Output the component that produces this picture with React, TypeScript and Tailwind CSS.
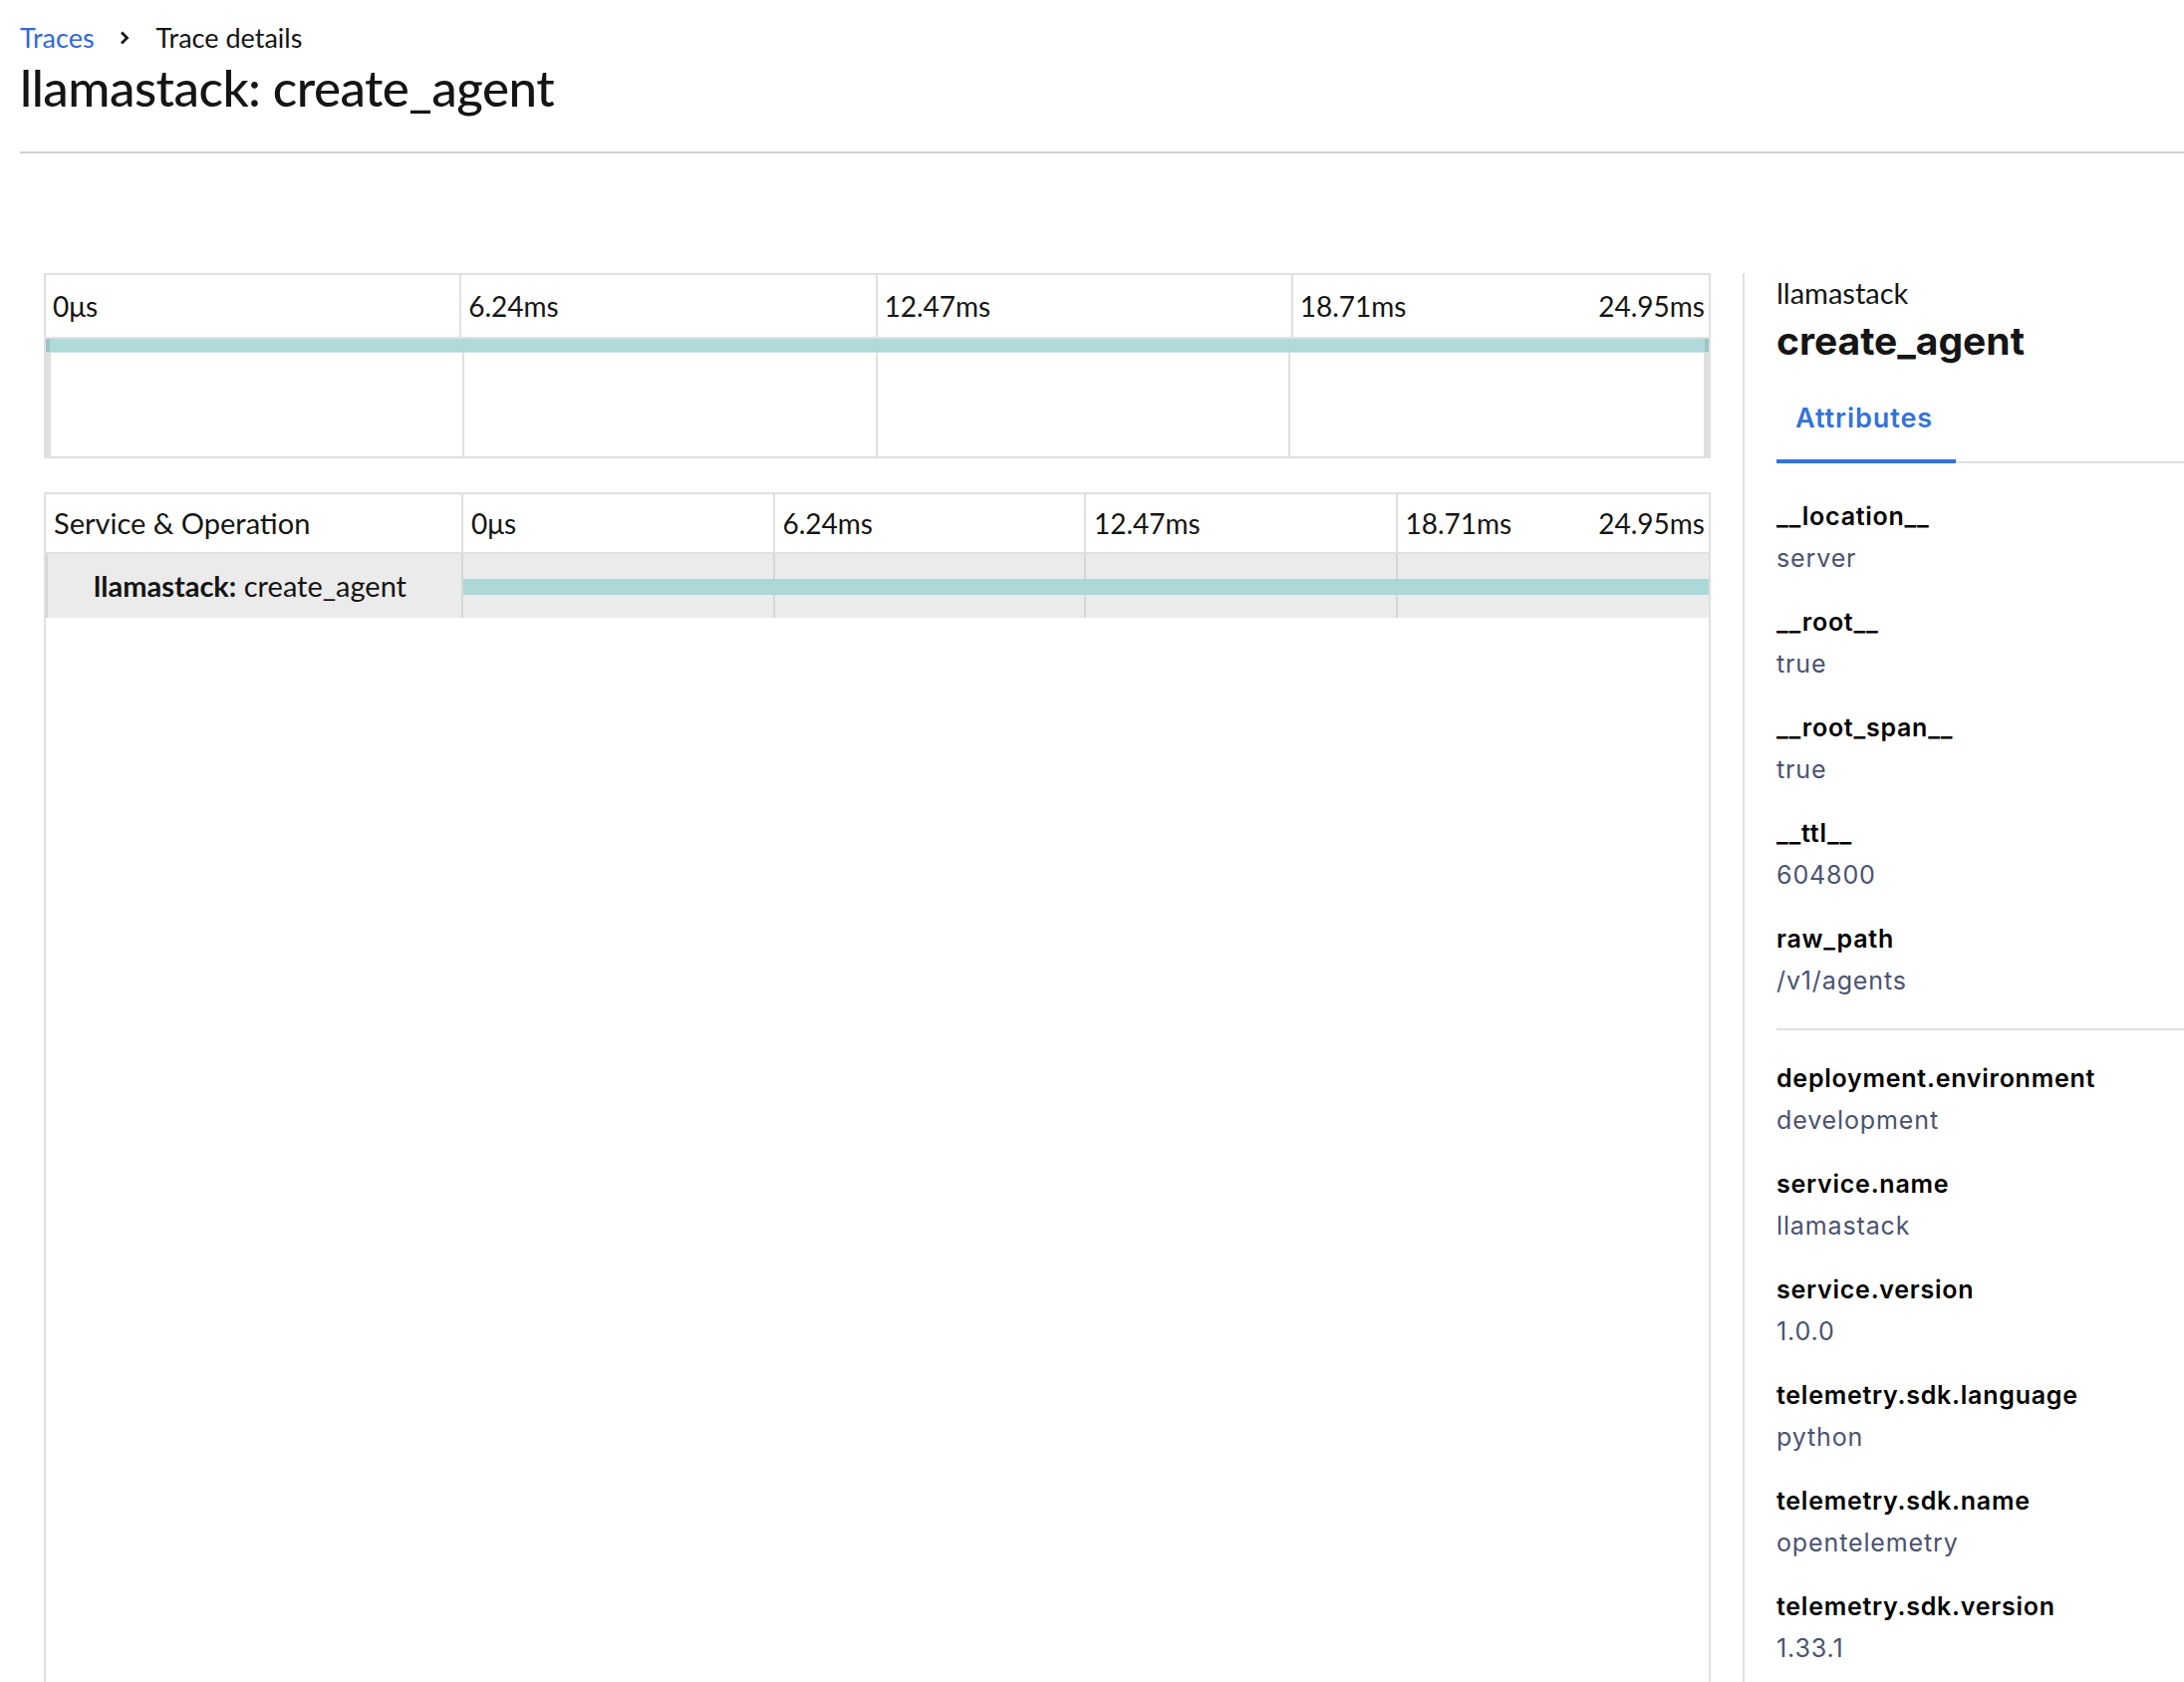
import React from "react";

const attrs1 = [
  ["__location__", "server"],
  ["__root__", "true"],
  ["__root_span__", "true"],
  ["__ttl__", "604800"],
  ["raw_path", "/v1/agents"],
];
const attrs2 = [
  ["deployment.environment", "development"],
  ["service.name", "llamastack"],
  ["service.version", "1.0.0"],
  ["telemetry.sdk.language", "python"],
  ["telemetry.sdk.name", "opentelemetry"],
  ["telemetry.sdk.version", "1.33.1"],
];

function Attr({ k, v }: { k: string; v: string }) {
  return (
    <div className="flex flex-col">
      <div className="h-[42px] flex items-center text-[25px] font-semibold text-black [font-family:Inter,sans-serif] tracking-[0.03em]">
        {k}
      </div>
      <div className="h-[42px] flex items-center text-[25px] text-[#4b5270] [font-family:Inter,sans-serif] tracking-[0.035em]">
        {v}
      </div>
    </div>
  );
}

export default function App() {
  return (
    <div className="w-[2192px] h-[1688px] overflow-hidden bg-white text-[#151515] [font-family:Lato,sans-serif]">
      <div className="pl-[20px] pt-[22px]">
        <div className="h-[32px] flex items-center text-[27px]">
          <span className="text-[#2f6ad4]">Traces</span>
          <svg className="ml-[23px] mr-[25px]" width="14" height="16" viewBox="0 0 14 16">
            <path d="M4 2.5l5.5 5.5-5.5 5.5" stroke="#151515" strokeWidth="2.8" fill="none" />
          </svg>
          <span>Trace details</span>
        </div>
        <div className="mt-[5px] h-[58px] flex items-center text-[51px] font-medium tracking-[-0.01em]">
          llamastack: create_agent
        </div>
      </div>
      <div className="ml-[20px] mt-[35px] border-t-2 border-[#d2d2d2]" />

      <div className="flex pt-[120px] pl-[44px]">
        {/* left column */}
        <div className="w-[1673px] flex flex-col">
          {/* minimap */}
          <div className="h-[186px] border-2 border-[#e0e0e0] flex flex-col">
            <div className="h-[64px] grid grid-cols-4 border-b-2 border-[#e0e0e0] text-[28px]">
              <div className="border-r-2 border-[#e0e0e0] pl-[7px] flex items-center">0μs</div>
              <div className="border-r-2 border-[#e0e0e0] pl-[7px] flex items-center">6.24ms</div>
              <div className="border-r-2 border-[#e0e0e0] pl-[7px] flex items-center">12.47ms</div>
              <div className="pl-[7px] pr-[4px] flex items-center justify-between">
                <span>18.71ms</span>
                <span>24.95ms</span>
              </div>
            </div>
            <div className="flex-1 relative flex">
              <div className="w-[5px] bg-[#e0e0e0]" />
              <div className="flex-1 grid grid-cols-4">
                <div className="border-r-2 border-[#e0e0e0]" />
                <div className="border-r-2 border-[#e0e0e0]" />
                <div className="border-r-2 border-[#e0e0e0]" />
                <div />
              </div>
              <div className="w-[5px] bg-[#e0e0e0]" />
              <div className="absolute left-0 right-0 top-0 h-[14px] bg-[#acd8d8] opacity-95 border-b border-[#c6e4e4]">
                <div className="absolute left-0 top-0 bottom-0 w-[4px] bg-[#98c4c5]" />
                <div className="absolute right-0 top-0 bottom-0 w-[4px] bg-[#98c4c5]" />
              </div>
            </div>
          </div>

          {/* table */}
          <div className="mt-[34px] h-[1300px] border-2 border-[#e0e0e0] flex flex-col">
            <div className="h-[60px] flex border-b-2 border-[#e0e0e0] text-[28px]">
              <div className="w-[419px] border-r-2 border-[#e0e0e0] pl-[8px] flex items-center text-[29px]">
                Service &amp; Operation
              </div>
              <div className="flex-1 grid grid-cols-4">
                <div className="border-r-2 border-[#e0e0e0] pl-[8px] flex items-center">0μs</div>
                <div className="border-r-2 border-[#e0e0e0] pl-[8px] flex items-center">6.24ms</div>
                <div className="border-r-2 border-[#e0e0e0] pl-[8px] flex items-center">12.47ms</div>
                <div className="pl-[8px] pr-[4px] flex items-center justify-between">
                  <span>18.71ms</span>
                  <span>24.95ms</span>
                </div>
              </div>
            </div>
            <div className="h-[64px] flex bg-[#ebebeb] text-[29px]">
              <div className="w-[419px] border-r-2 border-l-2 border-[#d6d6d6] pl-[46px] flex items-center">
                <span className="font-bold">llamastack:</span>
                <span>&nbsp;create_agent</span>
              </div>
              <div className="flex-1 relative grid grid-cols-4">
                <div className="border-r-2 border-[#d6d6d6]" />
                <div className="border-r-2 border-[#d6d6d6]" />
                <div className="border-r-2 border-[#d6d6d6]" />
                <div />
                <div className="absolute left-0 right-0 top-[25px] h-[16px] bg-[#acd8d8]" />
              </div>
            </div>
          </div>
        </div>

        {/* separator */}
        <div className="ml-[32px] w-[2px] bg-[#e0e0e0] h-[1450px]" />

        {/* right panel */}
        <div className="flex-1 pl-[32px] flex flex-col">
          <div className="h-[40px] flex items-center text-[29px]">llamastack</div>
          <div className="h-[56px] flex items-center text-[39px] font-bold [font-family:Inter,sans-serif]">
            create_agent
          </div>
          <div className="mt-[20px] flex border-b-2 border-[#e0e0e0]">
            <div className="w-[180px] h-[75px] flex items-center pb-[10px] pl-[19px] border-b-4 border-[#3473d8] -mb-[2px] text-[27px] font-semibold text-[#3473d8] [font-family:Inter,sans-serif] tracking-[0.035em]">
              Attributes
            </div>
          </div>
          <div className="mt-[33px] flex flex-col gap-[22px]">
            {attrs1.map(([k, v]) => (
              <Attr key={k} k={k} v={v} />
            ))}
          </div>
          <div className="mt-[26px] border-t-2 border-[#e0e0e0]" />
          <div className="mt-[28px] flex flex-col gap-[22px]">
            {attrs2.map(([k, v]) => (
              <Attr key={k} k={k} v={v} />
            ))}
          </div>
        </div>
      </div>
    </div>
  );
}
